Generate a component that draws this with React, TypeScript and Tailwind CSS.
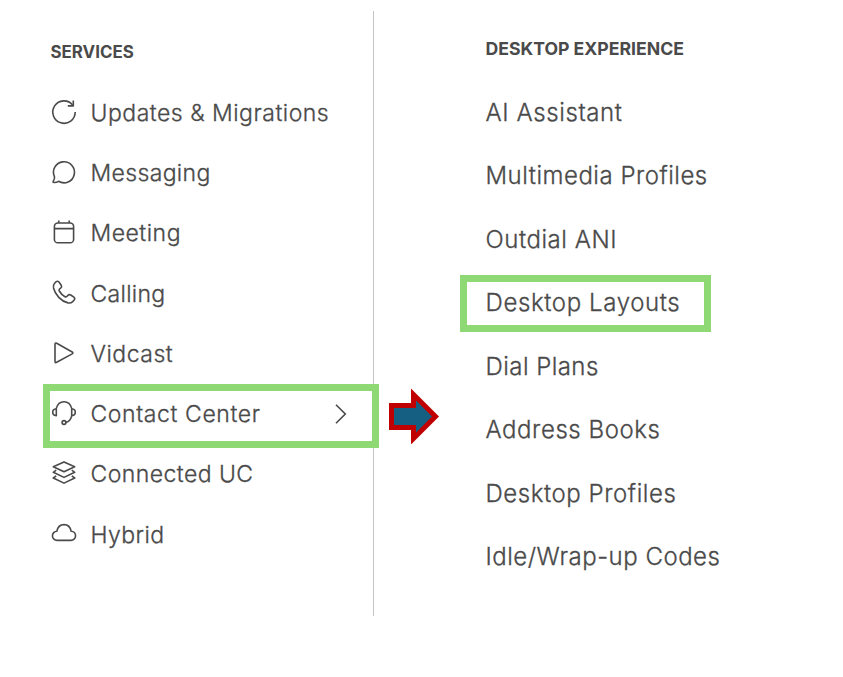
import React, { type ReactNode } from "react";

const services: { label: string; tracking: string; icon: ReactNode }[] = [
  {
    label: "Updates & Migrations",
    tracking: "tracking-[0.51px]",
    icon: (
      <>
        <path d="M23.2 12A11.2 11.2 0 1 1 20.6 4.9" />
        <path d="M21.3 .4V5.9H15.8" />
      </>
    ),
  },
  {
    label: "Messaging",
    tracking: "tracking-[0.35px]",
    icon: <path d="M6.6 21.3A10.5 10.5 0 1 0 2.5 16.8C2.7 18.6 2 20.3 1.2 21.4Q.7 22.5 1.8 22.5C3.6 22.6 5.4 22.1 6.6 21.3Z" />,
  },
  {
    label: "Meeting",
    tracking: "tracking-[0.5px]",
    icon: (
      <>
        <rect x="2.4" y="3" width="19.2" height="19.8" rx="3.4" />
        <path d="M2.4 8.6H21.6M6.8 .4V3M17.2 .4V3" />
      </>
    ),
  },
  {
    label: "Calling",
    tracking: "tracking-[0.3px]",
    icon: (
      <path d="M4 1.8Q5.5 .6 7 2L9.2 5.2Q10.2 6.8 8.8 8L7.4 9.2Q6.7 10 7.3 11Q9.3 14.6 13 16.7Q14 17.2 14.8 16.5L16.2 15.1Q17.3 14.1 18.7 15L21.9 17.2Q23.4 18.5 22.2 20L20.7 21.6Q18.8 23.5 16 22.9C9 21.2 3.2 14.7 1.5 8Q.9 5.2 2.6 3.3Z" />
    ),
  },
  {
    label: "Vidcast",
    tracking: "tracking-[0.5px]",
    icon: <path d="M3 3.4V20.2Q3 22.2 4.7 21.3L20.2 12.9Q21.6 11.9 20.2 11L4.7 2.3Q3 1.4 3 3.4Z" />,
  },
  {
    label: "Contact Center",
    tracking: "tracking-[0.6px]",
    icon: (
      <>
        <path d="M4.2 7.6C5.4 3.2 8.3 .7 12 .7S18.6 3.2 19.8 7.6M19.8 14.6Q18.3 20.6 13.9 21.4" />
        <path d="M4.3 7.7V14.7Q.7 14.3 .7 11.2T4.3 7.7ZM19.7 7.7V14.7Q23.3 14.3 23.3 11.2T19.7 7.7Z" />
        <circle cx="12" cy="21.5" r="1.9" />
      </>
    ),
  },
  {
    label: "Connected UC",
    tracking: "tracking-[0.45px]",
    icon: (
      <>
        <path d="M1.3 5.7L12 .9L22.7 5.7L12 10.8Z" />
        <path d="M4.2 9.2L1.3 11.3L12 16.4L22.7 11.3L19.8 9.2M4.2 14.9L1.3 17L12 22.1L22.7 17L19.8 14.9" />
      </>
    ),
  },
  {
    label: "Hybrid",
    tracking: "tracking-[0.4px]",
    icon: <path d="M5.2 19.4H18.8A4.6 4.6 0 0 0 19.1 10.2C18.3 5.9 15.5 3.6 12 3.6S5.7 5.9 4.9 10.2A4.6 4.6 0 0 0 5.2 19.4Z" />,
  },
];

const desktopLinks = [
  { label: "AI Assistant", tracking: "tracking-[0.6px]" },
  { label: "Multimedia Profiles", tracking: "tracking-[0.5px]" },
  { label: "Outdial ANI", tracking: "tracking-[0.55px]" },
  { label: "Desktop Layouts", tracking: "tracking-[0.62px]" },
  { label: "Dial Plans", tracking: "tracking-[0.45px]" },
  { label: "Address Books", tracking: "tracking-[0.56px]" },
  { label: "Desktop Profiles", tracking: "tracking-[0.56px]" },
  { label: "Idle/Wrap-up Codes", tracking: "tracking-[0.5px]" },
];

export default function App() {
  return (
    <div className="relative flex h-[677px] w-[843px] overflow-hidden bg-white pt-[11px] font-['Inter',sans-serif] text-[#4a4a4a]">
      <nav className="h-[605px] w-[374px] border-r border-[#c4c4c4] pl-[52px]">
        <h2 className="mt-[29px] -ml-[1.5px] text-[16.9px] leading-6 font-bold">SERVICES</h2>
        <ul className="mt-[18.95px]">
          {services.map(({ label, tracking, icon }) => (
            <li key={label} className="flex h-[60.25px] items-center text-[23px] font-light [-webkit-text-stroke:0.3px_#4a4a4a]">
              <svg
                viewBox="0 0 24 24"
                className="mr-[14.5px] -mt-[3px] size-6 shrink-0 overflow-visible"
                fill="none"
                stroke="currentColor"
                strokeWidth="1.6"
                strokeLinejoin="round"
              >
                {icon}
              </svg>
              <span className={tracking}>{label}</span>
              {label === "Contact Center" && (
                <svg viewBox="0 0 12 20" className="-mt-px mr-[26.5px] ml-auto h-5 w-3" fill="none" stroke="currentColor" strokeWidth="1.6">
                  <path d="M1 .7L10.3 10L1 19.3" />
                </svg>
              )}
            </li>
          ))}
        </ul>
      </nav>
      <section className="pl-[111.5px]">
        <h2 className="mt-[25.5px] text-[17.65px] leading-6 font-bold">DESKTOP EXPERIENCE</h2>
        <ul className="mt-[20.8px]">
          {desktopLinks.map(({ label, tracking }) => (
            <li key={label} className="flex h-[63.45px] items-center text-2xl font-light [-webkit-text-stroke:0.3px_#4a4a4a]">
              <span className={tracking}>{label}</span>
            </li>
          ))}
        </ul>
      </section>
      <div className="absolute top-[384px] left-[43px] h-16 w-[336px] border-7 border-[#8ed973]" />
      <div className="absolute top-[275px] left-[460px] h-[57px] w-[251px] border-7 border-[#8ed973]" />
      <svg className="absolute top-[388px] left-[388px] h-14 w-[52px]" viewBox="388 388 52 56">
        <path fill="#c00000" d="M389 403H411V388.5L439 416.5L411 444.5V430H389Z" />
        <path fill="#156082" d="M394 408H416V400.5L432 416.5L416 432.5V425H394Z" />
      </svg>
    </div>
  );
}
